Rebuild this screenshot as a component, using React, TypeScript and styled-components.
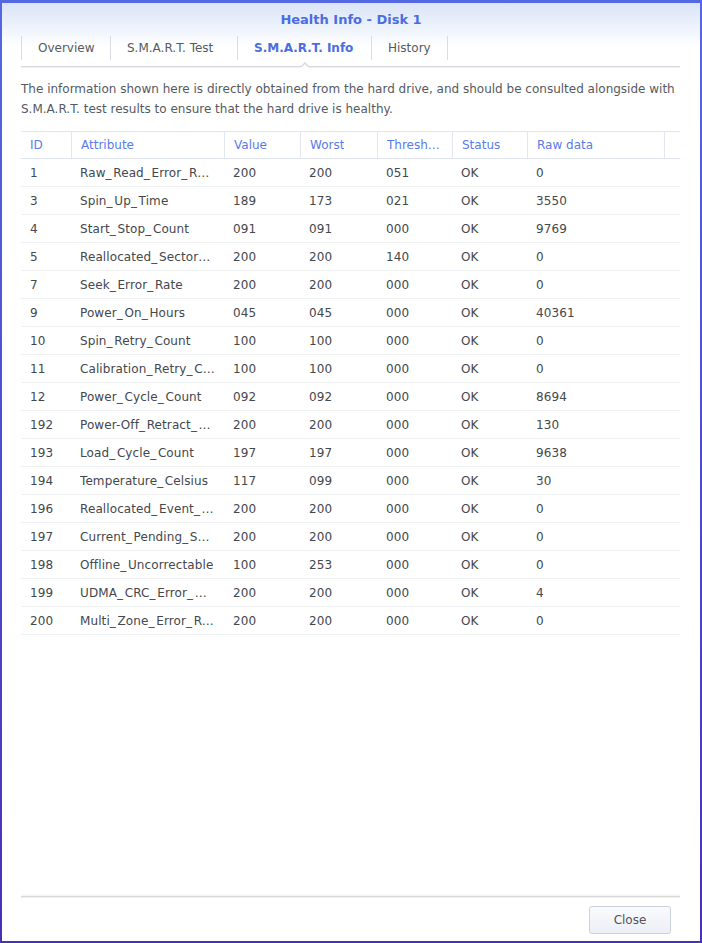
import React from "react";
import styled, { createGlobalStyle } from "styled-components";

const GlobalStyle = createGlobalStyle`
  html, body { margin: 0; padding: 0; background: #ffffff; }
  body { font-family: "DejaVu Sans", Verdana, sans-serif; }
  * { box-sizing: border-box; }
`;

const Frame = styled.div`
  width: 702px;
  height: 943px;
  padding: 3px 2px 2px 2px;
  background: linear-gradient(180deg, #5468e2 0%, #4a46cc 60%, #4830b8 100%);
`;

const Panel = styled.div`
  height: 100%;
  display: flex;
  flex-direction: column;
  background: linear-gradient(180deg, #dae4f7 0px, #f2f6fd 30px, #ffffff 44px);
`;

const TitleBar = styled.div`
  height: 33px;
  display: flex;
  align-items: center;
  justify-content: center;
  padding-bottom: 1px;
  font-size: 13px;
  font-weight: bold;
  color: #4a6ee0;
`;

const TabStrip = styled.div`
  margin: 0 20px 0 19px;
  height: 31px;
  display: flex;
  align-items: flex-start;
  border-bottom: 1px solid #d6d8dd;
  box-shadow: 0 1px 0 #eef0f3;
`;

const Tab = styled.div<{ $active?: boolean; $w: number }>`
  position: relative;
  width: ${(p) => p.$w}px;
  height: 24px;
  display: flex;
  align-items: center;
  padding: 0 16px;
  font-size: 12px;
  white-space: nowrap;
  color: ${(p) => (p.$active ? "#4a6ee0" : "#555a62")};
  font-weight: ${(p) => (p.$active ? "bold" : "normal")};
  border-left: 1px solid #d9dde6;
  &:last-child {
    border-right: 1px solid #d9dde6;
  }
  ${(p) =>
    p.$active &&
    `
    &::after {
      content: "";
      position: absolute;
      left: 50%;
      bottom: -7px;
      margin-left: -5px;
      width: 0;
      height: 0;
      border-left: 5px solid transparent;
      border-right: 5px solid transparent;
      border-bottom: 5px solid #d6d8dd;
    }
    &::before {
      content: "";
      position: absolute;
      left: 50%;
      bottom: -8px;
      margin-left: -4px;
      width: 0;
      height: 0;
      border-left: 4px solid transparent;
      border-right: 4px solid transparent;
      border-bottom: 4px solid #ffffff;
      z-index: 1;
    }
  `}
`;

const Body = styled.div`
  flex: 1;
  padding: 12px 20px 0 19px;
  display: flex;
  flex-direction: column;
`;

const Description = styled.p`
  margin: 0 0 12px 0;
  font-size: 12px;
  line-height: 20px;
  color: #555a62;
`;

const Grid = styled.div`
  display: grid;
  grid-template-columns: 50px 153px 76px 77px 75px 75px 137px 1fr;
`;

const HeadRow = styled(Grid)`
  height: 28px;
  border-top: 1px solid #e2e6ef;
  border-bottom: 1px solid #dfe4f0;
`;

const HeadCell = styled.div<{ $first?: boolean }>`
  display: flex;
  align-items: center;
  padding: 0 8px 0 9px;
  font-size: 12px;
  color: #5a7bec;
  white-space: nowrap;
  overflow: hidden;
  min-width: 0;
  border-left: ${(p) => (p.$first ? "none" : "1px solid #e2e7f2")};
`;

const BodyRow = styled(Grid)`
  height: 28px;
  border-bottom: 1px solid #eef0f2;
`;

const Cell = styled.div`
  display: flex;
  align-items: center;
  padding: 0 9px;
  font-size: 12px;
  letter-spacing: 0.1px;
  color: #44474d;
  white-space: nowrap;
  overflow: hidden;
  min-width: 0;
`;

const Clip = styled.span`
  display: block;
  min-width: 0;
  overflow: hidden;
  text-overflow: ellipsis;
  white-space: nowrap;
`;

/* underscores in attribute names are drawn a little wider */
const Under = styled.span`
  letter-spacing: 1.7px;
`;

const Footer = styled.div`
  margin: 0 20px 0 19px;
  padding: 9px 9px 7px 0;
  display: flex;
  justify-content: flex-end;
  border-top: 1px solid #d8d8d8;
  box-shadow: inset 0 1px 0 #f0f0f0;
  position: relative;
  &::before {
    content: "";
    position: absolute;
    left: 0;
    right: 0;
    top: -3px;
    height: 2px;
    background: linear-gradient(180deg, #ffffff, #f1f1f1);
  }
`;

const Button = styled.button`
  width: 82px;
  height: 28px;
  border: 1px solid #c9d1e2;
  border-radius: 3px;
  background: linear-gradient(180deg, #fafbfd 0%, #eceff6 100%);
  font-family: "DejaVu Sans", Verdana, sans-serif;
  font-size: 12px;
  color: #50545c;
  cursor: pointer;
`;

type Row = [string, string, string, string, string, string, string];

const rows: Row[] = [
  ["1", "Raw_Read_Error_Rate", "200", "200", "051", "OK", "0"],
  ["3", "Spin_Up_Time", "189", "173", "021", "OK", "3550"],
  ["4", "Start_Stop_Count", "091", "091", "000", "OK", "9769"],
  ["5", "Reallocated_Sector_Ct", "200", "200", "140", "OK", "0"],
  ["7", "Seek_Error_Rate", "200", "200", "000", "OK", "0"],
  ["9", "Power_On_Hours", "045", "045", "000", "OK", "40361"],
  ["10", "Spin_Retry_Count", "100", "100", "000", "OK", "0"],
  ["11", "Calibration_Retry_Count", "100", "100", "000", "OK", "0"],
  ["12", "Power_Cycle_Count", "092", "092", "000", "OK", "8694"],
  ["192", "Power-Off_Retract_Count", "200", "200", "000", "OK", "130"],
  ["193", "Load_Cycle_Count", "197", "197", "000", "OK", "9638"],
  ["194", "Temperature_Celsius", "117", "099", "000", "OK", "30"],
  ["196", "Reallocated_Event_Count", "200", "200", "000", "OK", "0"],
  ["197", "Current_Pending_Sector", "200", "200", "000", "OK", "0"],
  ["198", "Offline_Uncorrectable", "100", "253", "000", "OK", "0"],
  ["199", "UDMA_CRC_Error_Count", "200", "200", "000", "OK", "4"],
  ["200", "Multi_Zone_Error_Rate", "200", "200", "000", "OK", "0"],
];

const headers = ["ID", "Attribute", "Value", "Worst", "Threshold", "Status", "Raw data", ""];

const tabs = [
  { label: "Overview", w: 89 },
  { label: "S.M.A.R.T. Test", w: 127 },
  { label: "S.M.A.R.T. Info", w: 134, active: true },
  { label: "History", w: 77 },
];

function renderValue(v: string) {
  const parts = v.split("_");
  return parts.map((p, i) => (
    <React.Fragment key={i}>
      {i > 0 && <Under>_</Under>}
      {p}
    </React.Fragment>
  ));
}

export default function App() {
  return (
    <>
      <GlobalStyle />
      <Frame>
        <Panel>
          <TitleBar>Health Info - Disk 1</TitleBar>
          <TabStrip>
            {tabs.map((t) => (
              <Tab key={t.label} $w={t.w} $active={t.active}>
                {t.label}
              </Tab>
            ))}
          </TabStrip>
          <Body>
            <Description>
              The information shown here is directly obtained from the hard drive, and should be
              consulted alongside with S.M.A.R.T. test results to ensure that the hard drive is
              healthy.
            </Description>
            <HeadRow>
              {headers.map((h, i) => (
                <HeadCell key={i} $first={i === 0}>
                  <Clip>{h}</Clip>
                </HeadCell>
              ))}
            </HeadRow>
            {rows.map((r) => (
              <BodyRow key={r[0]}>
                {r.map((v, i) => (
                  <Cell key={i}>
                    <Clip>{renderValue(v)}</Clip>
                  </Cell>
                ))}
                <Cell />
              </BodyRow>
            ))}
          </Body>
          <Footer>
            <Button>Close</Button>
          </Footer>
        </Panel>
      </Frame>
    </>
  );
}
